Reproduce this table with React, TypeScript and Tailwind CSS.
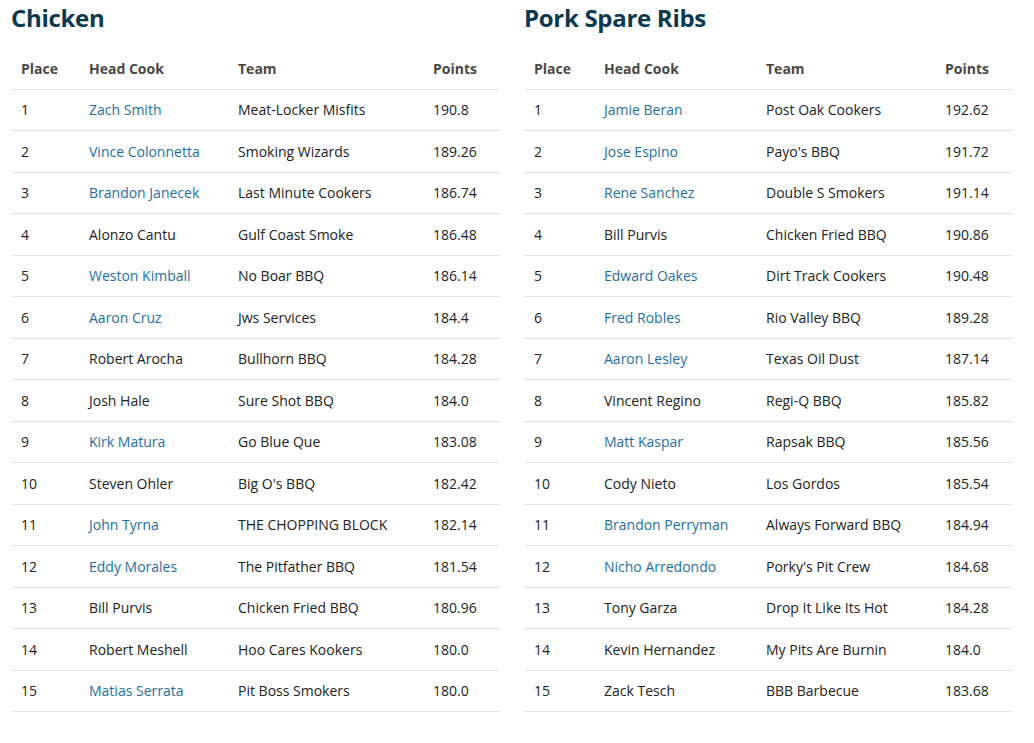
import React from "react";

type Row = [string, string, boolean, string, string];

const chicken: Row[] = [
  ["1", "Zach Smith", true, "Meat-Locker Misfits", "190.8"],
  ["2", "Vince Colonnetta", true, "Smoking Wizards", "189.26"],
  ["3", "Brandon Janecek", true, "Last Minute Cookers", "186.74"],
  ["4", "Alonzo Cantu", false, "Gulf Coast Smoke", "186.48"],
  ["5", "Weston Kimball", true, "No Boar BBQ", "186.14"],
  ["6", "Aaron Cruz", true, "Jws Services", "184.4"],
  ["7", "Robert Arocha", false, "Bullhorn BBQ", "184.28"],
  ["8", "Josh Hale", false, "Sure Shot BBQ", "184.0"],
  ["9", "Kirk Matura", true, "Go Blue Que", "183.08"],
  ["10", "Steven Ohler", false, "Big O's BBQ", "182.42"],
  ["11", "John Tyrna", true, "THE CHOPPING BLOCK", "182.14"],
  ["12", "Eddy Morales", true, "The Pitfather BBQ", "181.54"],
  ["13", "Bill Purvis", false, "Chicken Fried BBQ", "180.96"],
  ["14", "Robert Meshell", false, "Hoo Cares Kookers", "180.0"],
  ["15", "Matias Serrata", true, "Pit Boss Smokers", "180.0"],
];

const pork: Row[] = [
  ["1", "Jamie Beran", true, "Post Oak Cookers", "192.62"],
  ["2", "Jose Espino", true, "Payo's BBQ", "191.72"],
  ["3", "Rene Sanchez", true, "Double S Smokers", "191.14"],
  ["4", "Bill Purvis", false, "Chicken Fried BBQ", "190.86"],
  ["5", "Edward Oakes", true, "Dirt Track Cookers", "190.48"],
  ["6", "Fred Robles", true, "Rio Valley BBQ", "189.28"],
  ["7", "Aaron Lesley", true, "Texas Oil Dust", "187.14"],
  ["8", "Vincent Regino", false, "Regi-Q BBQ", "185.82"],
  ["9", "Matt Kaspar", true, "Rapsak BBQ", "185.56"],
  ["10", "Cody Nieto", false, "Los Gordos", "185.54"],
  ["11", "Brandon Perryman", true, "Always Forward BBQ", "184.94"],
  ["12", "Nicho Arredondo", true, "Porky's Pit Crew", "184.68"],
  ["13", "Tony Garza", false, "Drop It Like Its Hot", "184.28"],
  ["14", "Kevin Hernandez", false, "My Pits Are Burnin", "184.0"],
  ["15", "Zack Tesch", false, "BBB Barbecue", "183.68"],
];

function Table({ title, rows, widths }: { title: string; rows: Row[]; widths: string[] }) {
  return (
    <div className="w-[489px]">
      <h2 className="text-[24px] leading-[36px] font-bold text-[#0b3a50] tracking-[-0.3px]">{title}</h2>
      <table className="mt-[13px] w-full border-collapse table-fixed">
        <colgroup>
          {widths.map((w, i) => (
            <col key={i} style={{ width: w }} />
          ))}
        </colgroup>
        <thead>
          <tr className="h-[40px] border-b border-[#e3e3e3]">
            {["Place", "Head Cook", "Team", "Points"].map((h) => (
              <th key={h} className="text-left font-bold text-[#484848] px-[10px] align-middle">
                {h}
              </th>
            ))}
          </tr>
        </thead>
        <tbody>
          {rows.map((r) => (
            <tr key={r[0]} className="h-[41.53px] border-b border-[#e3e3e3] text-[#222]">
              <td className="px-[10px]">{r[0]}</td>
              <td className={"px-[10px] whitespace-nowrap " + (r[2] ? "text-[#1e6fa3]" : "")}>{r[1]}</td>
              <td className="px-[10px] whitespace-nowrap">{r[3]}</td>
              <td className="px-[10px]">{r[4]}</td>
            </tr>
          ))}
        </tbody>
      </table>
    </div>
  );
}

export default function App() {
  return (
    <div
      className="w-[1034px] h-[743px] bg-white px-[11px] flex gap-[24px] text-[14px]"
      style={{ fontFamily: '"Open Sans", "Noto Sans", sans-serif' }}
    >
      <Table title="Chicken" rows={chicken} widths={["68px", "149px", "195px", "77px"]} />
      <Table title="Pork Spare Ribs" rows={pork} widths={["70px", "162px", "179px", "78px"]} />
    </div>
  );
}
